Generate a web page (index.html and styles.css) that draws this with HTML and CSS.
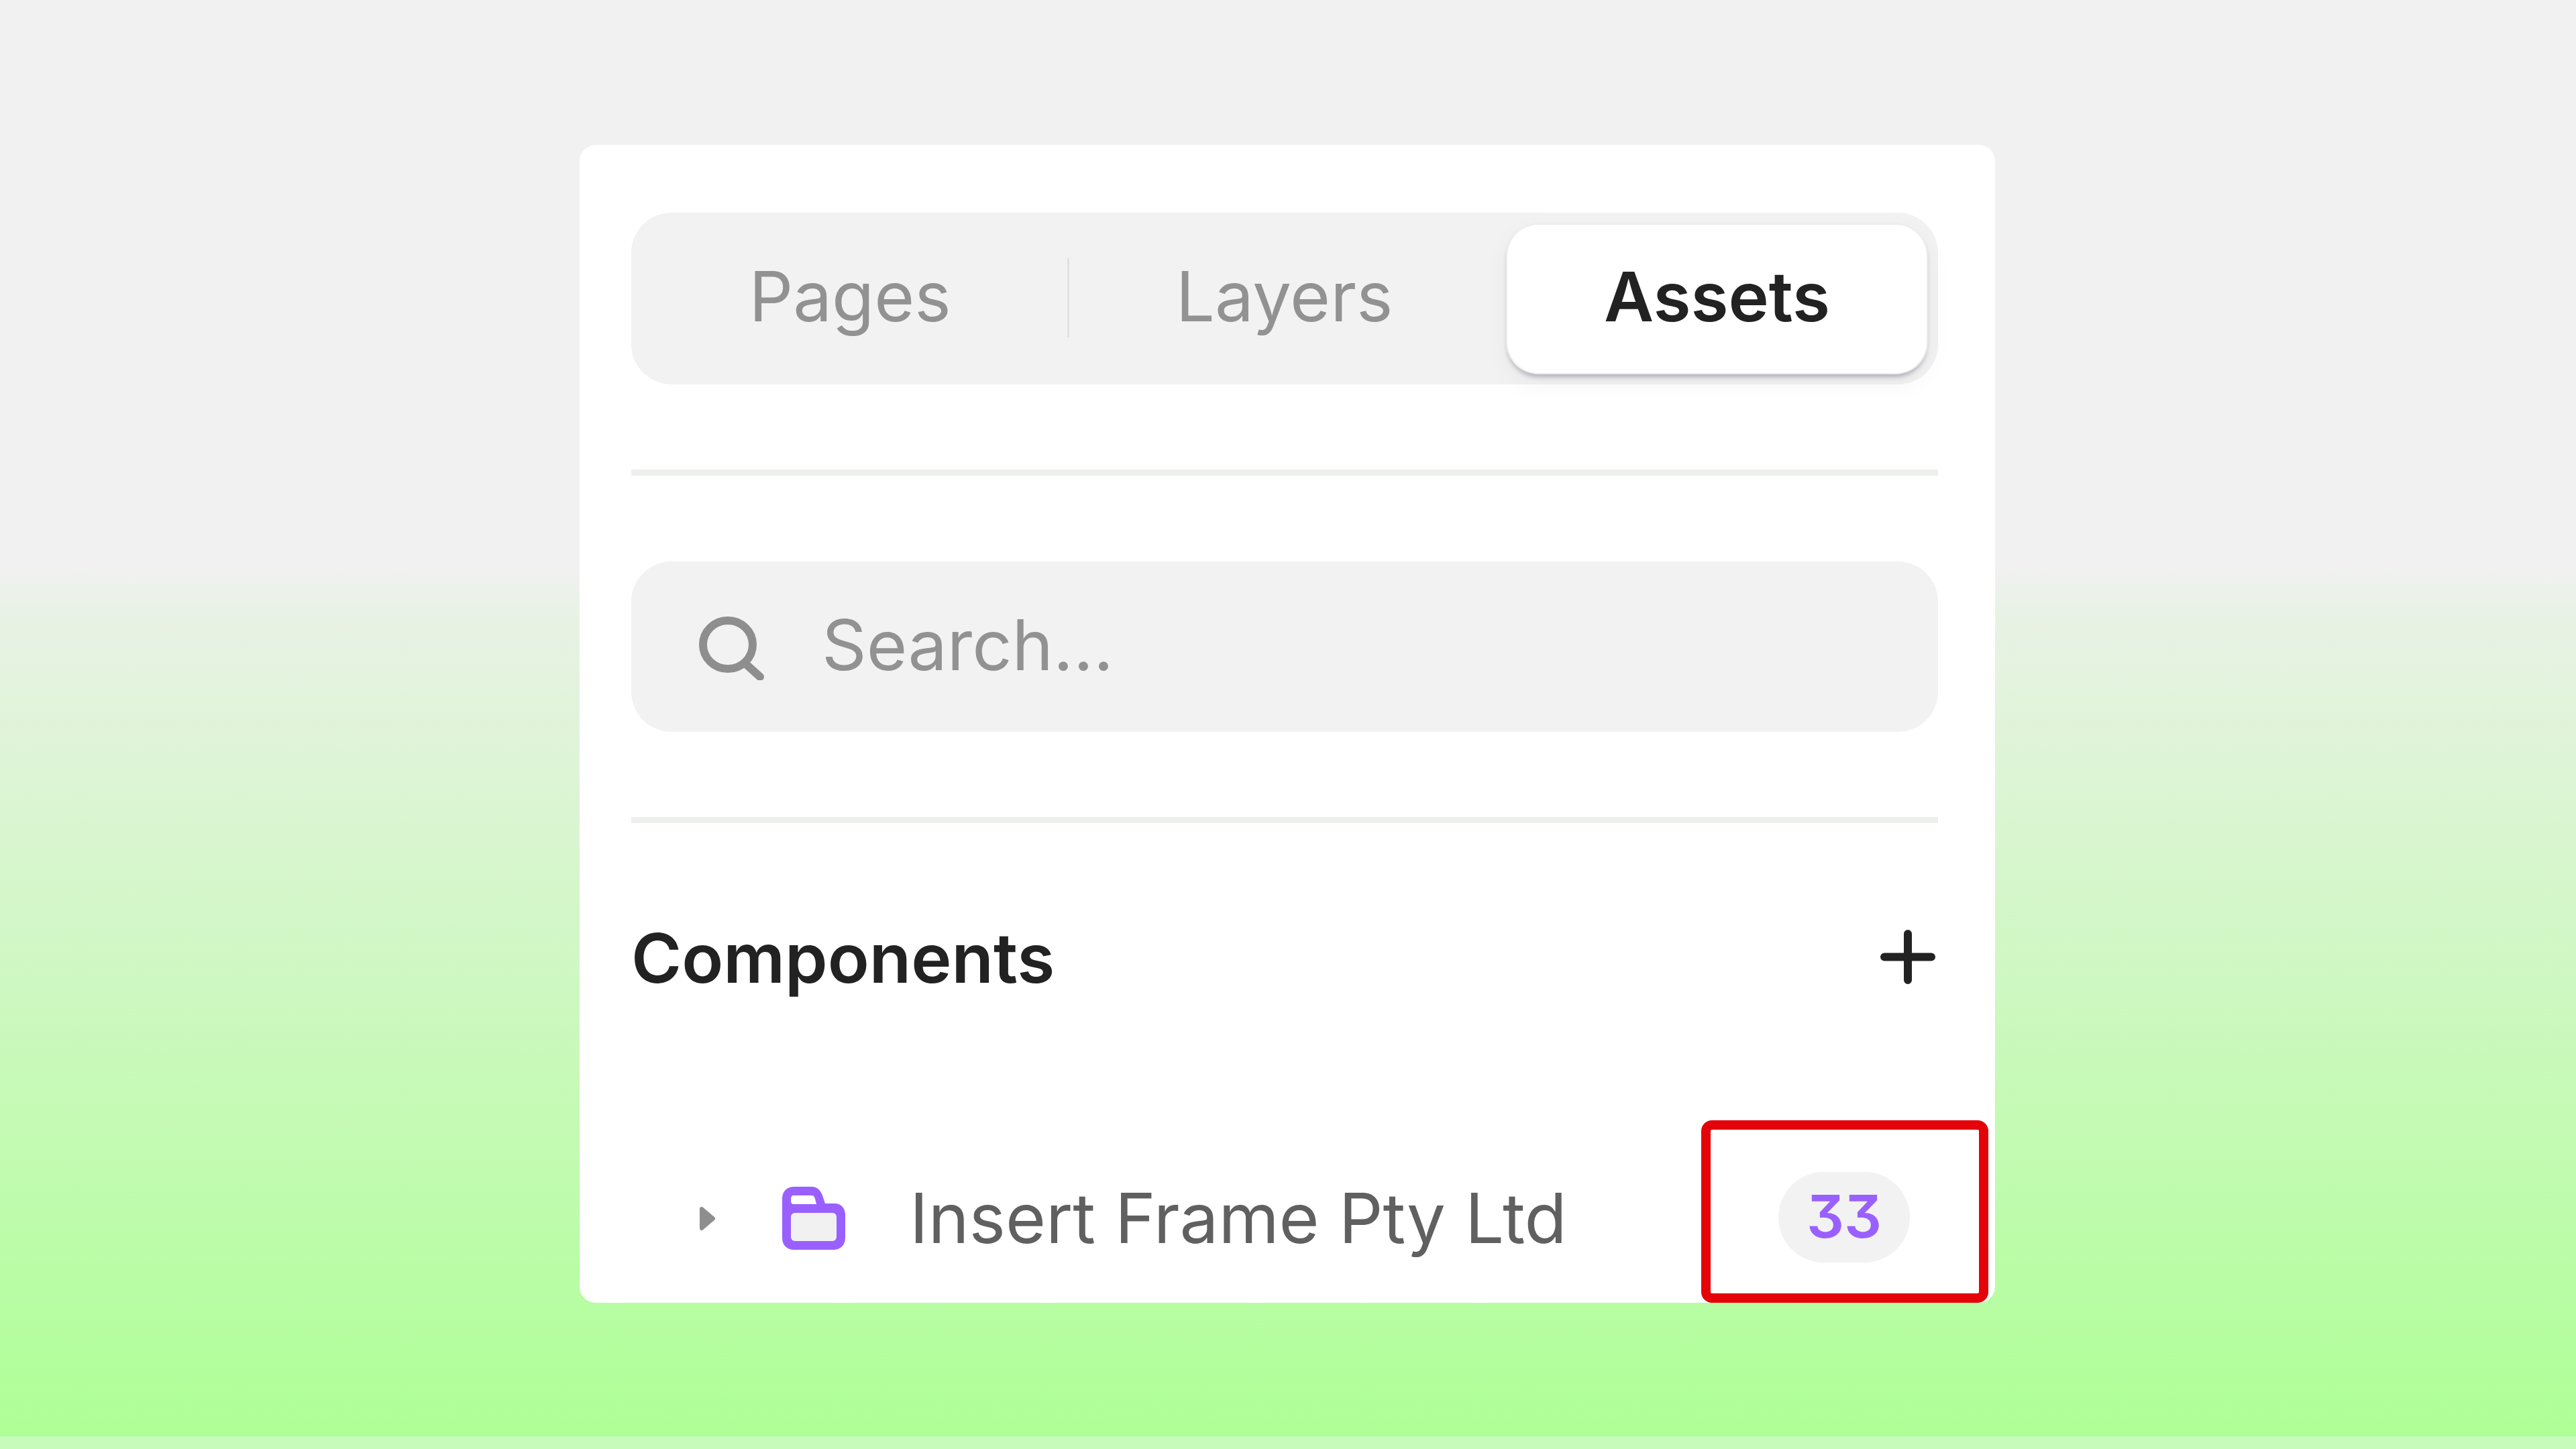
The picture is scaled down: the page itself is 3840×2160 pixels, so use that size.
FILE: index.html
```html
<!DOCTYPE html>
<html lang="en">
<head>
    <meta charset="UTF-8">
    <title>Assets panel</title>
    <link rel="stylesheet" href="styles.css">
</head>
<body>
    <main class="stage">
        <section class="panel">
            <div class="tabs">
                <div class="tab tab-pages">Pages</div>
                <span class="tab-sep"></span>
                <div class="tab tab-layers">Layers</div>
                <div class="tab tab-assets">Assets</div>
            </div>
            <hr class="rule">
            <div class="search">
                <svg class="search-icon" viewBox="0 0 98 95" fill="none" stroke="#8e8e8e" stroke-width="12" stroke-linecap="round">
                    <ellipse cx="43" cy="42" rx="37" ry="36"/>
                    <path d="M70 71 L91 90"/>
                </svg>
                <span class="search-text">Search...</span>
            </div>
            <hr class="rule">
            <div class="section-head">
                <span class="section-title">Components</span>
                <svg class="plus-icon" viewBox="0 0 82 81" fill="none" stroke="#222222" stroke-width="12" stroke-linecap="round">
                    <path d="M41 6 V75 M6 40.5 H76"/>
                </svg>
            </div>
            <div class="row">
                <svg class="caret" viewBox="0 0 25 37">
                    <path d="M4 4 L21 18.5 L4 33 Z" fill="#8e8e8e" stroke="#8e8e8e" stroke-width="6" stroke-linejoin="round"/>
                </svg>
                <svg class="folder" viewBox="0 0 94 94">
                    <path d="M18 0 H44 C52 0 57 5 60 13 L64 25 H78 C88 25 94 32 94 42 V76 C94 87 87 94 76 94 H18 C7 94 0 87 0 76 V18 C0 7 7 0 18 0 Z" fill="#9a60ff"/>
                    <path d="M17 13 H44 C47 13 48 15 49 18 L51 26 H17 C14 26 13 24 13 20 C13 15 14 13 17 13 Z" fill="#ffffff"/>
                    <rect x="13" y="39" width="68" height="42" rx="6" fill="#f1f1f1"/>
                </svg>
                <span class="row-label">Insert Frame Pty Ltd</span>
                <span class="count">33</span>
            </div>
            <div class="highlight"></div>
        </section>
    </main>
    <div class="strip"></div>
</body>
</html>
```

FILE: styles.css
```css
body {
    margin: 0;
    height: 100vh;
    display: flex;
    flex-direction: column;
    font-family: "Inter", "Liberation Sans", sans-serif;
    font-size: 103px;
    line-height: 120px;
}

.stage {
    flex: 1;
    padding: 216px 0 0 864px;
    background: linear-gradient(#f1f1f1 840px, #e8f2e4 920px, #aeff96 100%);
}

.strip {
    height: 19px;
    background: #c6fbbb;
}

.panel {
    position: relative;
    box-sizing: border-box;
    width: 2110px;
    height: 1726px;
    padding: 101px 85px 0 77px;
    background: #ffffff;
    border-radius: 24px;
    overflow: hidden;
}

.tabs {
    display: flex;
    box-sizing: border-box;
    height: 256px;
    padding: 18px 17px 17px 2px;
    background: #f2f2f2;
    border-radius: 60px;
}

.tab {
    display: flex;
    align-items: center;
    justify-content: center;
    box-sizing: border-box;
    padding-bottom: 8px;
    color: #929292;
}
.tab-pages {
    width: 648px;
}
.tab-layers {
    width: 641px;
    margin-right: 12px;
}
.tab-assets {
    width: 625px;
    color: #222222;
    font-size: 102px;
    font-weight: 600;
    background: #ffffff;
    border-radius: 46px;
    box-shadow: 0 0 0 2px #eaedea, 0 6px 6px rgba(70, 60, 100, 0.32), 0 14px 40px rgba(0, 0, 0, 0.05);
}
.tab-sep {
    align-self: center;
    width: 3px;
    height: 118px;
    margin-bottom: 4px;
    background: #dfe2df;
}

.rule {
    height: 9px;
    margin: 127px 0;
    border: 0;
    background: #ecefec;
}

.search {
    display: flex;
    align-items: center;
    gap: 85px;
    box-sizing: border-box;
    height: 254px;
    margin-top: 128px;
    padding: 0 0 7px 101px;
    background: #f2f2f2;
    border-radius: 60px;
    color: #929292;
    font-size: 104px;
}
.search-icon {
    width: 98px;
    height: 95px;
    margin-top: 12px;
}

.section-head {
    display: flex;
    align-items: center;
    justify-content: space-between;
    height: 120px;
    margin-top: -127px;
    padding: 141px 4px 0 0;
}
.section-title {
    color: #222222;
    font-size: 102px;
    font-weight: 600;
}
.plus-icon {
    width: 82px;
    height: 81px;
    margin-top: -4px;
}

.row {
    display: flex;
    align-items: center;
    height: 120px;
    margin-top: 268px;
    padding: 0 42px 0 101px;
    color: #606060;
}
.caret {
    width: 25px;
    height: 37px;
    flex: none;
    margin-right: 99px;
}
.folder {
    width: 94px;
    height: 94px;
    flex: none;
    margin-right: 96px;
}
.count {
    display: flex;
    align-items: center;
    justify-content: center;
    box-sizing: border-box;
    width: 196px;
    height: 135px;
    margin: 0 0 3px auto;
    padding-bottom: 3px;
    border-radius: 68px;
    background: #f2f2f2;
    color: #9a60ff;
    font-size: 88px;
    font-weight: 600;
    font-feature-settings: "cv09";
}

/* annotation drawn over the panel */
.highlight {
    position: absolute;
    left: 1672px;
    top: 1454px;
    box-sizing: border-box;
    width: 428px;
    height: 272px;
    border: 14px solid #e30309;
    border-radius: 16px;
}
```
